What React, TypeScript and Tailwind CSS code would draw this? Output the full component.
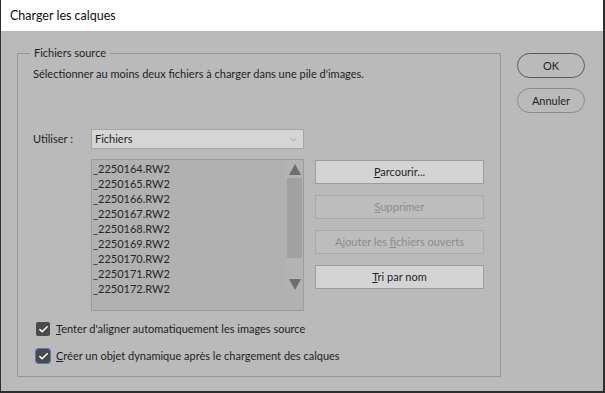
import { Check, ChevronDown } from 'lucide-react'

const files = [
  '_2250164.RW2',
  '_2250165.RW2',
  '_2250166.RW2',
  '_2250167.RW2',
  '_2250168.RW2',
  '_2250169.RW2',
  '_2250170.RW2',
  '_2250171.RW2',
  '_2250172.RW2',
]

function ActionButton({ children, disabled }: { children: React.ReactNode; disabled?: boolean }) {
  return (
    <button
      type="button"
      className={
        disabled
          ? 'h-[24px] w-[169px] border border-[#a9a9a9] bg-[#bdbdbd] text-[#8c8c8c]'
          : 'h-[24px] w-[169px] border border-[#9c9c9c] bg-[#d4d4d4] text-[#1e1e1e]'
      }
    >
      {children}
    </button>
  )
}

function CheckRow({ children, focused }: { children: React.ReactNode; focused?: boolean }) {
  return (
    <label className="flex h-[16px] items-center gap-[6px] pl-[2px]">
      <span
        className={
          focused
            ? 'flex h-[14px] w-[14px] items-center justify-center rounded-[2px] bg-[#4a4a4a] outline outline-1 outline-[#4d7fc9]'
            : 'flex h-[14px] w-[14px] items-center justify-center rounded-[2px] bg-[#4a4a4a]'
        }
      >
        <Check size={11} strokeWidth={3.5} className="text-white" />
      </span>
      <span>{children}</span>
    </label>
  )
}

export default function App() {
  return (
    <div
      className="h-[393px] w-[605px] overflow-hidden bg-[#2e2e2e] text-[11px] leading-[16px] text-[#1e1e1e]"
      style={{ fontFamily: 'Lato, sans-serif' }}
    >
      <div className="ml-[1px] flex h-[391px] w-[602px] flex-col bg-[#bababa]">
        {/* Title bar */}
        <div className="flex h-[31px] items-center bg-white pl-[9px] text-[12.5px] text-[#111]">
          Charger les calques
        </div>

        <div className="flex pl-[16px] pt-[22px]">
          {/* Group box */}
          <div className="relative h-[324px] w-[484px] border border-[#959595]">
            <span className="absolute left-[12px] top-[-9px] bg-[#bababa] px-[4px]">Fichiers source</span>

            <div className="flex flex-col pl-[15px] pt-[12px]">
              <p>Sélectionner au moins deux fichiers à charger dans une pile d'images.</p>

              <div className="mt-[47px] flex items-center">
                <span className="w-[58px]">Utiliser :</span>
                <div className="flex h-[20px] w-[213px] items-center justify-between border border-[#a5a5a5] bg-[#d5d5d5] pl-[3px] pr-[4px]">
                  <span>Fichiers</span>
                  <ChevronDown size={11} strokeWidth={1.5} className="text-[#8c8c8c]" />
                </div>
              </div>

              <div className="mt-[10px] flex pl-[58px]">
                <div className="flex h-[152px] w-[213px] border border-[#9c9c9c] bg-[#b1b1b1]">
                  <ul className="flex-1 pl-[1px] pt-[1px] text-[11px] leading-[15px] text-[#262626]">
                    {files.map((f) => (
                      <li key={f}>{f}</li>
                    ))}
                  </ul>
                  <div className="flex h-[128px] w-[17px] flex-col items-center bg-[#b3b3b3]">
                    <div className="mt-[4px] h-0 w-0 border-x-[6px] border-b-[11px] border-x-transparent border-b-[#6f6f6f]" />
                    <div className="mt-[3px] h-[80px] w-[15px] bg-[#a1a1a1]" />
                    <div className="mt-auto mb-[-2px] h-0 w-0 border-x-[6px] border-t-[11px] border-x-transparent border-t-[#6f6f6f]" />
                  </div>
                </div>

                <div className="ml-[11px] mt-[1px] flex flex-col gap-[11px]">
                  <ActionButton>
                    <u>P</u>arcourir...
                  </ActionButton>
                  <ActionButton disabled>
                    <u>S</u>upprimer
                  </ActionButton>
                  <ActionButton disabled>
                    Ajouter les <u>f</u>ichiers ouverts
                  </ActionButton>
                  <ActionButton>
                    <u>T</u>ri par nom
                  </ActionButton>
                </div>
              </div>

              <div className="mt-[10px] flex flex-col gap-[11px] pl-[1px]">
                <CheckRow>
                  <u>T</u>enter d'aligner automatiquement les images source
                </CheckRow>
                <CheckRow focused>
                  <u>C</u>réer un objet dynamique après le chargement des calques
                </CheckRow>
              </div>
            </div>
          </div>

          {/* OK / Cancel */}
          <div className="ml-[16px] flex flex-col gap-[10px]">
            <button
              type="button"
              className="h-[25px] w-[68px] rounded-full border border-[#5a5a5a] bg-[#bababa] text-[#1e1e1e]"
            >
              OK
            </button>
            <button
              type="button"
              className="h-[25px] w-[68px] rounded-full border border-[#8a8a8a] bg-[#bababa] text-[#1e1e1e]"
            >
              Annuler
            </button>
          </div>
        </div>
      </div>
    </div>
  )
}
